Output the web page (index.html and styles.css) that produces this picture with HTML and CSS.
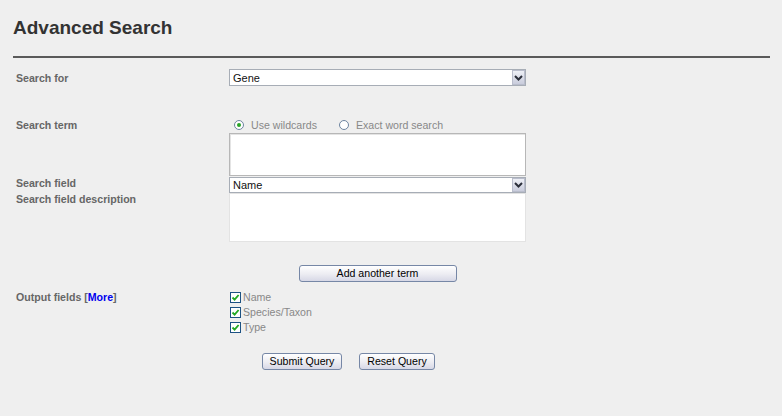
FILE: index.html
```html
<!DOCTYPE html>
<html lang="en">
<head>
<meta charset="utf-8">
<title>Advanced Search</title>
<link rel="stylesheet" href="styles.css">
</head>
<body>
<div class="page">
  <h1 class="title">Advanced Search</h1>
  <div class="rule"></div>
  <form class="form">
    <div class="row row-for">
      <div class="label">Search for</div>
      <div class="select-wrap">
        <select class="select"><option>Gene</option></select>
        <span class="arrow"><svg width="9" height="6" viewBox="0 0 9 6"><path d="M1 1 L4.5 4.5 L8 1" fill="none" stroke="#2b2f3a" stroke-width="2"/></svg></span>
      </div>
    </div>

    <div class="row row-term">
      <div class="label-col">
        <div class="label">Search term</div>
        <div class="label field-label">Search field</div>
        <div class="label">Search field description</div>
      </div>
      <div class="ctl-col">
        <div class="radios">
          <span class="radio-opt"><span class="radio on"></span><span>Use wildcards</span></span>
          <span class="radio-opt"><span class="radio"></span><span>Exact word search</span></span>
        </div>
        <textarea class="term"></textarea>
        <div class="select-wrap small">
          <select class="select"><option>Name</option></select>
          <span class="arrow"><svg width="9" height="6" viewBox="0 0 9 6"><path d="M1 1 L4.5 4.5 L8 1" fill="none" stroke="#2b2f3a" stroke-width="2"/></svg></span>
        </div>
        <div class="desc"></div>
      </div>
    </div>

    <div class="row row-add">
      <div class="label"></div>
      <div class="ctl-col center"><button type="button" class="btn add">Add another term</button></div>
    </div>

    <div class="row row-out">
      <div class="label out-label">Output fields [<a class="more" href="#">More</a>]</div>
      <div class="ctl-col checks">
        <label class="check"><span class="box"><svg width="9" height="9" viewBox="0 0 9 9"><path d="M1.5 4.5 L3.6 6.6 L7.6 2" fill="none" stroke="#21a821" stroke-width="1.8"/></svg></span>Name</label>
        <label class="check"><span class="box"><svg width="9" height="9" viewBox="0 0 9 9"><path d="M1.5 4.5 L3.6 6.6 L7.6 2" fill="none" stroke="#21a821" stroke-width="1.8"/></svg></span>Species/Taxon</label>
        <label class="check"><span class="box"><svg width="9" height="9" viewBox="0 0 9 9"><path d="M1.5 4.5 L3.6 6.6 L7.6 2" fill="none" stroke="#21a821" stroke-width="1.8"/></svg></span>Type</label>
      </div>
    </div>

    <div class="row row-actions">
      <div class="label"></div>
      <div class="ctl-col actions">
        <button type="button" class="btn submit">Submit Query</button>
        <button type="button" class="btn reset">Reset Query</button>
      </div>
    </div>
  </form>
</div>
</body>
</html>
```

FILE: styles.css
```css
html, body {
  margin: 0;
  padding: 0;
  background: #efefef;
}
body {
  font-family: "Liberation Sans", Arial, sans-serif;
  font-size: 10.6px;
  color: #333;
  width: 782px;
  height: 416px;
  overflow: hidden;
}
.page {
  padding: 0 12px 0 13px;
}
.title {
  margin: 16px 0 0 0;
  font-size: 19px;
  line-height: 24px;
  font-weight: bold;
  color: #333;
}
.rule {
  margin-top: 16px;
  height: 0;
  border-top: 2px solid #5a5a5a;
}
.form {
  padding-left: 3px;
  margin-top: 11px;
}
.row {
  display: flex;
}
.label,
.label-col {
  width: 213px;
  flex: none;
}
.label {
  font-weight: bold;
  color: #666;
  line-height: 16px;
  white-space: nowrap;
}
.ctl-col {
  width: 297px;
  display: flex;
  flex-direction: column;
}
.row-for {
  align-items: center;
  height: 17px;
}
.row-term { margin-top: 31px; }
.field-label { margin-top: 42px; }
.row-add { margin-top: 23px; }
.row-out { margin-top: 8px; }
.out-label { margin-top: -1px; }
.row-actions { margin-top: 18px; }

.select-wrap {
  position: relative;
  width: 297px;
  height: 17px;
}
.select-wrap.small { height: 16px; margin-top: 1px; }
.select {
  -webkit-appearance: none;
  appearance: none;
  box-sizing: border-box;
  display: block;
  width: 297px;
  height: 100%;
  margin: 0;
  border: 1px solid #a7adb6;
  background: #fff;
  font-family: "Liberation Sans", Arial, sans-serif;
  font-size: 11px;
  color: #111;
  padding: 0 0 0 3px;
  border-radius: 0;
  outline: none;
}
.arrow {
  position: absolute;
  right: 1px;
  top: 1px;
  bottom: 1px;
  width: 13px;
  box-sizing: border-box;
  border: 1px solid #b9bdcc;
  background: linear-gradient(#eef0f6, #c9ccdc);
  display: flex;
  align-items: center;
  justify-content: center;
  pointer-events: none;
}

.radios {
  display: flex;
  align-items: center;
  height: 16px;
  color: #888;
  line-height: 16px;
}
.radio-opt {
  display: inline-flex;
  align-items: center;
}
.radio-opt:first-child { margin-left: 5px; }
.radio-opt + .radio-opt { margin-left: 22px; }
.radio {
  box-sizing: border-box;
  width: 10px;
  height: 10px;
  border: 1px solid #6d84a0;
  border-radius: 50%;
  background: #fff;
  margin-right: 7px;
  position: relative;
}
.radio.on::after {
  content: "";
  position: absolute;
  left: 2px;
  top: 2px;
  width: 4px;
  height: 4px;
  border-radius: 50%;
  background: #28a428;
}

.term {
  display: block;
  box-sizing: border-box;
  width: 297px;
  height: 43px;
  margin: 0;
  border: 1px solid #b7b7b7;
  box-shadow: inset 1px 1px 0 #e4e4e4;
  background: #fff;
  resize: none;
  outline: none;
}
.desc {
  box-sizing: border-box;
  width: 297px;
  height: 49px;
  border: 1px solid #e3e3e3;
  background: #fff;
}

.center {
  align-items: center;
}
.btn {
  box-sizing: border-box;
  height: 17px;
  margin: 0;
  padding: 0;
  border: 1px solid #7687a6;
  border-radius: 3px;
  background: linear-gradient(#ffffff, #ececf2 55%, #d7d8e6);
  font-family: "Liberation Sans", Arial, sans-serif;
  font-size: 10.6px;
  line-height: 15px;
  color: #000;
  cursor: pointer;
}
.add { width: 158px; }
.submit { width: 80px; }
.reset { width: 76px; }
.actions {
  flex-direction: row;
  gap: 17px;
  padding-left: 33px;
}

.more {
  color: #0000ee;
  text-decoration: none;
  font-weight: bold;
}

.checks {
  color: #888;
}
.check {
  display: flex;
  align-items: center;
  height: 15px;
  line-height: 15px;
}
.box {
  box-sizing: border-box;
  width: 11px;
  height: 11px;
  margin-left: 1px;
  margin-right: 2px;
  border: 1px solid #1d5283;
  background: #fff;
  display: flex;
  align-items: center;
  justify-content: center;
}
```
